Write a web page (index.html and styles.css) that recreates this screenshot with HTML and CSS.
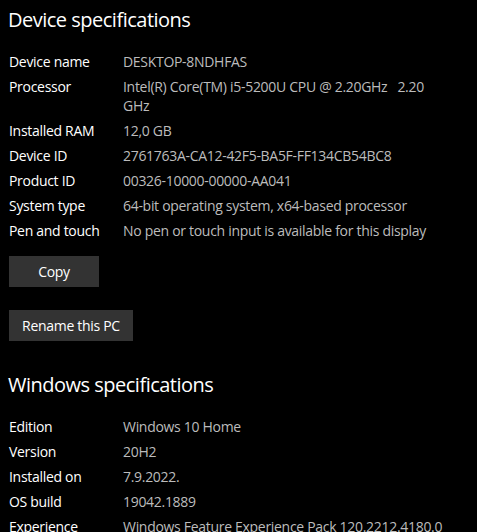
FILE: index.html
```html
<!DOCTYPE html>
<html>
<head>
<meta charset="utf-8">
<link rel="stylesheet" href="styles.css">
</head>
<body>
<div class="page">
  <h1 class="title">Device specifications</h1>
  <div class="specs">
    <div class="row"><div class="label">Device name</div><div class="value">DESKTOP-8NDHFAS</div></div>
    <div class="row"><div class="label">Processor</div><div class="value">Intel(R) Core(TM) i5-5200U CPU @ 2.20GHz&nbsp;&nbsp;&nbsp;2.20 GHz</div></div>
    <div class="row"><div class="label">Installed RAM</div><div class="value">12,0 GB</div></div>
    <div class="row"><div class="label">Device ID</div><div class="value">2761763A-CA12-42F5-BA5F-FF134CB54BC8</div></div>
    <div class="row"><div class="label">Product ID</div><div class="value">00326-10000-00000-AA041</div></div>
    <div class="row"><div class="label">System type</div><div class="value">64-bit operating system, x64-based processor</div></div>
    <div class="row"><div class="label">Pen and touch</div><div class="value">No pen or touch input is available for this display</div></div>
  </div>
  <button class="btn btn-copy">Copy</button>
  <button class="btn btn-rename">Rename this PC</button>
  <h1 class="title title-win">Windows specifications</h1>
  <div class="specs">
    <div class="row"><div class="label">Edition</div><div class="value">Windows 10 Home</div></div>
    <div class="row"><div class="label">Version</div><div class="value">20H2</div></div>
    <div class="row"><div class="label">Installed on</div><div class="value">7.9.2022.</div></div>
    <div class="row"><div class="label">OS build</div><div class="value">19042.1889</div></div>
    <div class="row"><div class="label">Experience</div><div class="value">Windows Feature Experience Pack 120.2212.4180.0</div></div>
  </div>
</div>
</body>
</html>
```
FILE: styles.css
```css
html, body {
  margin: 0;
  padding: 0;
  background: #000;
  overflow: hidden;
}
body {
  font-family: "Open Sans", "Noto Sans", sans-serif;
  color: #fff;
}
.page {
  padding: 0 0 0 9px;
  display: flex;
  flex-direction: column;
  align-items: flex-start;
}
.title {
  font-size: 20px;
  font-weight: 400;
  margin: 6px 0 0 -1px;
  line-height: 28px;
  letter-spacing: -0.5px;
}
.title-win {
  margin-top: 30px;
}
.specs {
  display: flex;
  flex-direction: column;
  gap: 6px;
  margin-top: 18px;
  font-size: 14px;
  line-height: 19px;
  letter-spacing: -0.3px;
}
.row {
  display: flex;
}
.label {
  width: 114px;
  flex: none;
  color: #fff;
}
.value {
  width: 320px;
  color: #bcbcbc;
}
.btn {
  font-family: inherit;
  font-size: 14px;
  letter-spacing: -0.3px;
  color: #fff;
  background: #333;
  border: none;
  height: 31px;
  padding: 0;
  margin: 0;
}
.btn-copy {
  width: 90px;
  margin-top: 16px;
}
.btn-rename {
  width: 124px;
  margin-top: 23px;
}
```
